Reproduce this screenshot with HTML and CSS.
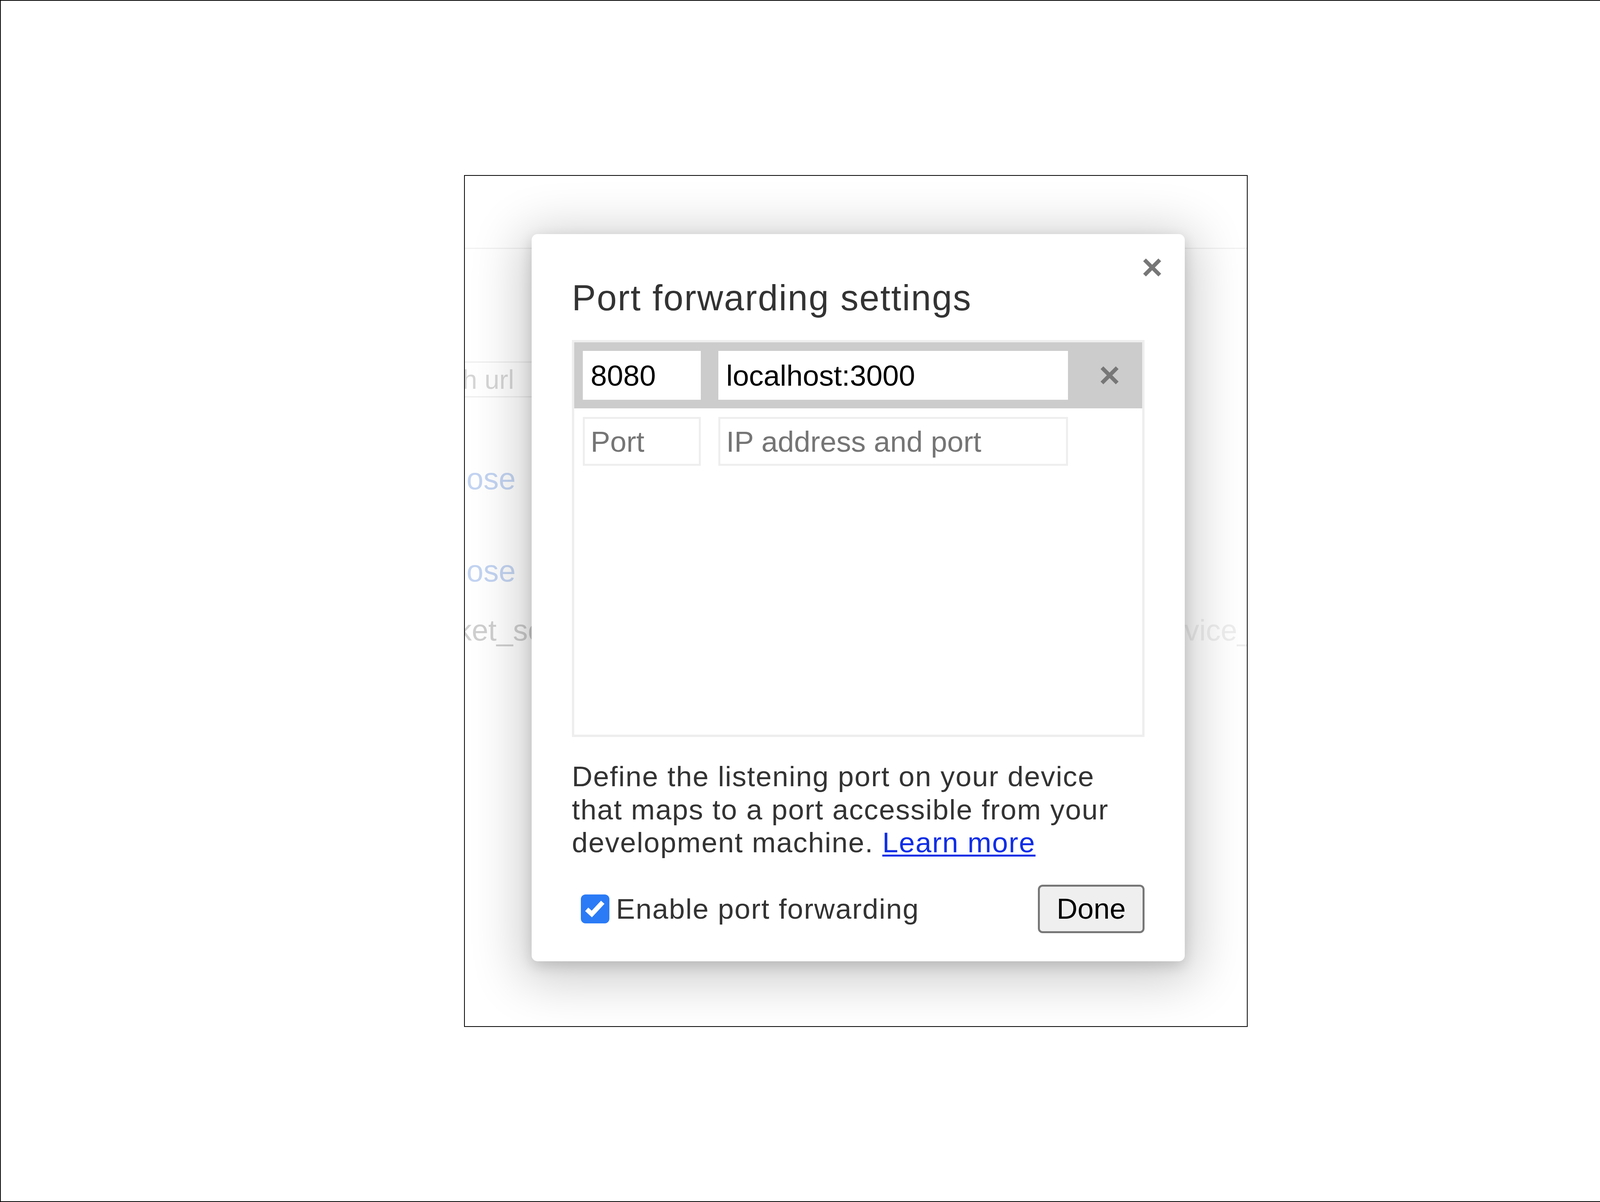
FILE: index.html
```html
<!DOCTYPE html>
<html lang="en">
<head>
<meta charset="utf-8">
<title>Port forwarding settings</title>
<link rel="stylesheet" href="styles.css">
</head>
<body>
<div class="screen">
  <div class="frame">
    <div class="bg">
      <div class="bg-head"></div>
      <div class="bg-url">Open tab with url</div>
      <div class="bg-link first">close</div>
      <div class="bg-link second">close</div>
      <div class="bg-row"><span class="bg-left">websocket_server</span><span class="bg-right">device_serial</span></div>
    </div>
    <div class="overlay">
      <div class="dialog">
        <button class="close-btn" aria-label="Close">
          <svg width="47" height="47" viewBox="0 0 47 47"><path d="M4 4L43 43M43 4L4 43" stroke="#777" stroke-width="10" fill="none"/></svg>
        </button>
        <h1 class="title">Port forwarding settings</h1>
        <div class="rules">
          <div class="rule selected">
            <input class="port" type="text" value="8080">
            <input class="addr" type="text" value="localhost:3000">
            <span class="remove">
              <svg width="47" height="47" viewBox="0 0 47 47"><path d="M4 4L43 43M43 4L4 43" stroke="#777" stroke-width="10" fill="none"/></svg>
            </span>
          </div>
          <div class="rule">
            <input class="port" type="text" placeholder="Port">
            <input class="addr" type="text" placeholder="IP address and port">
          </div>
        </div>
        <p class="desc">Define the listening port on your device that maps to a port accessible from your development machine. <a href="#">Learn more</a></p>
        <div class="footer">
          <label class="enable">
            <span class="check"><svg width="73" height="74" viewBox="0 0 73 74"><polyline points="15,38 28,50 56,20" stroke="#fff" stroke-width="12" fill="none"/></svg></span>
            <span class="enable-text">Enable port forwarding</span>
          </label>
          <button class="done">Done</button>
        </div>
      </div>
    </div>
  </div>
</div>
</body>
</html>
```

FILE: styles.css
```css
body {
  margin: 0;
  background: #fff;
}

.screen {
  width: 4382px;
  height: 3076px;
  box-sizing: border-box;
  border: 2px solid #000;
  display: flex;
  align-items: center;
  justify-content: center;
  font-family: "Liberation Sans", Arial, sans-serif;
  overflow: hidden;
}

.frame {
  position: relative;
  width: 2006px;
  height: 2180px;
  box-sizing: border-box;
  border: 2px solid #000;
  overflow: hidden;
  background: #fff;
}

/* faded page behind the dialog */
.bg {
  white-space: nowrap;
  overflow: hidden;
  height: 100%;
}

.bg-head {
  height: 184px;
  border-bottom: 3px solid #f1f1f1;
}

.bg-url {
  margin-top: 288px;
  margin-left: -411px;
  width: 1600px;
  height: 92px;
  box-sizing: border-box;
  border: 3px solid #eeeeee;
  padding-left: 20px;
  font-size: 68px;
  line-height: 86px;
  color: #d6d6d6;
}

.bg-link {
  margin-left: -52px;
  font-size: 78px;
  line-height: 92px;
  color: #c3d4f2;
}

.bg-link.first {
  margin-top: 162px;
}

.bg-link.second {
  margin-top: 144px;
}

.bg-row {
  display: flex;
  margin-top: 60px;
  font-size: 76px;
  line-height: 92px;
}

.bg-left {
  flex-shrink: 0;
  margin-left: -278px;
  color: #cfcfcf;
}

.bg-right {
  flex-shrink: 0;
  margin-left: 1423px;
  color: #eeeeee;
}

/* dialog */
.overlay {
  position: absolute;
  top: 0;
  left: 0;
  right: 0;
  bottom: 0;
  box-sizing: border-box;
  padding: 149px 0 0 171px;
}

.dialog {
  position: relative;
  width: 1672px;
  box-sizing: border-box;
  padding: 110px 103px 72px;
  background: #fff;
  border-radius: 15px;
  box-shadow: 0 22px 130px 28px rgba(0, 0, 0, 0.2), 0 11px 34px rgba(0, 0, 0, 0.15);
  color: #333;
}

.close-btn {
  position: absolute;
  top: 62px;
  right: 60px;
  width: 47px;
  height: 47px;
  padding: 0;
  margin: 0;
  border: 0;
  background: transparent;
  display: block;
}

.close-btn svg,
.remove svg,
.check svg {
  display: block;
}

.title {
  margin: 0;
  font-size: 92px;
  line-height: 106px;
  font-weight: normal;
  letter-spacing: 0.026em;
}

.rules {
  margin-top: 55px;
  height: 1016px;
  box-sizing: border-box;
  border: 6px solid #eeeeee;
}

.rule {
  display: flex;
  align-items: center;
  padding: 22px;
}

.rule.selected {
  background: #cccccc;
}

.rule input {
  flex-shrink: 0;
  height: 125px;
  box-sizing: border-box;
  margin: 0;
  padding: 0 15px;
  border: 5px solid #eeeeee;
  border-radius: 0;
  background: #fff;
  color: #000;
  font-family: "Liberation Sans", Arial, sans-serif;
  font-size: 75px;
  outline: none;
}

.rule.selected input {
  border-color: #fff;
}

.rule input::placeholder {
  color: #757575;
  opacity: 1;
}

.rule .port {
  width: 302px;
}

.rule .addr {
  width: 895px;
  margin-left: 45px;
}

.remove {
  display: block;
  flex-shrink: 0;
  width: 47px;
  height: 47px;
  margin-left: 83px;
}

.desc {
  margin: 59px 0 0;
  max-width: 1420px;
  font-size: 73px;
  line-height: 84.5px;
  letter-spacing: 0.026em;
}

.desc a {
  color: #0e2ee6;
  text-decoration: underline;
  text-decoration-thickness: 5px;
  text-underline-offset: 6px;
}

.footer {
  display: flex;
  align-items: center;
  justify-content: space-between;
  margin-top: 65px;
}

.enable {
  display: flex;
  align-items: center;
  margin-left: 23px;
  font-size: 73px;
  line-height: 84px;
  letter-spacing: 0.026em;
}

.check {
  display: block;
  flex-shrink: 0;
  width: 73px;
  height: 74px;
  margin-right: 17px;
  border-radius: 12px;
  background: #2b7bf6;
}

.done {
  width: 273px;
  height: 124px;
  box-sizing: border-box;
  margin: 0;
  padding: 0;
  border: 5px solid #777;
  border-radius: 12px;
  background: #efefef;
  color: #000;
  font-family: "Liberation Sans", Arial, sans-serif;
  font-size: 74px;
}
```
